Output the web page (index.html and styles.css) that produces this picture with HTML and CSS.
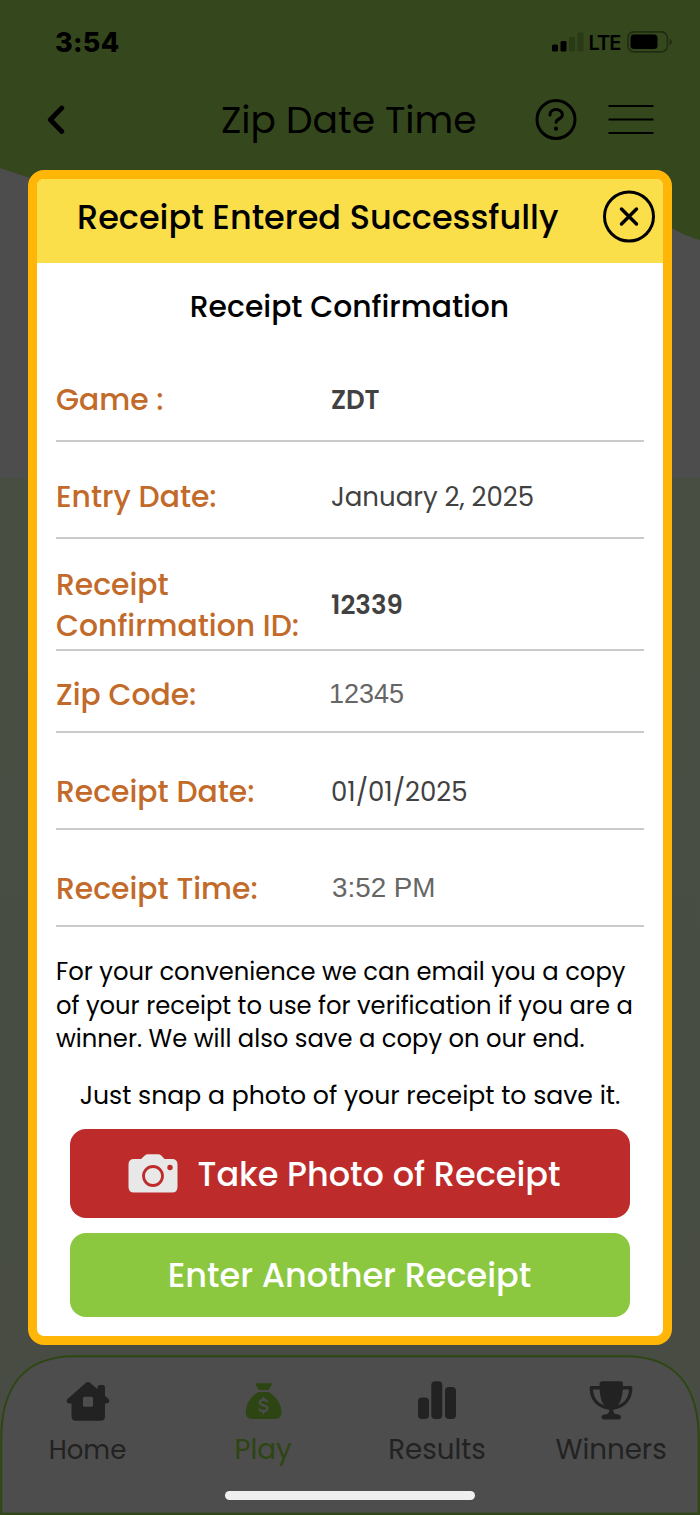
FILE: index.html
```html
<!DOCTYPE html>
<html lang="en">
<head>
<meta charset="utf-8">
<title>Zip Date Time</title>
<link rel="stylesheet" href="styles.css">
</head>
<body>
<div class="screen">
  <svg class="backdrop" viewBox="0 0 700 1515" aria-hidden="true">
    <defs>
      <linearGradient id="shade" x1="0" y1="0" x2="0" y2="1">
        <stop offset="0" stop-color="#484e42"/>
        <stop offset="1" stop-color="#484c44"/>
      </linearGradient>
    </defs>
    <rect width="700" height="1515" fill="#4d4d4d"/>
    <rect y="478" width="700" height="1037" fill="url(#shade)"/>
    <path d="M0 0H700V240Q685 236 670 227C560 180 420 240 240 220Q120 210 0 168Z" fill="#35471c"/>
  </svg>

  <header class="top">
    <div class="status">
      <span class="clock">3:54</span>
      <div class="signals">
        <svg width="32" height="20" viewBox="0 0 32 20" aria-hidden="true">
          <rect x="0" y="12.5" width="6" height="7" rx="1.5"/>
          <rect x="8.5" y="9" width="6" height="10.5" rx="1.5"/>
          <rect x="17" y="5" width="6" height="14.5" rx="1.5" fill="#2a3916"/>
          <rect x="25.500" y="0.500" width="6" height="19" rx="1.5" fill="#2a3916"/>
        </svg>
        <span class="lte">LTE</span>
        <svg width="46" height="22" viewBox="0 0 46 22" aria-hidden="true">
          <rect x="0.900" y="0.900" width="39.500" height="20" rx="6" fill="none" stroke="#202d10" stroke-width="1.600"/>
          <rect x="3.500" y="3.500" width="27" height="14.500" rx="3.500"/>
          <path d="M42.500 7.500Q45 9 45 11T42.500 14.500Z" fill="#202d10"/>
        </svg>
      </div>
    </div>
    <div class="nav">
      <svg class="back" width="20" height="30" viewBox="0 0 20 30" aria-label="Back"><path d="M16.800 3L5.300 14.700L16.800 26.500" fill="none" stroke="#000" stroke-width="4.800" stroke-linecap="round" stroke-linejoin="round"/></svg>
      <h1>Zip Date Time</h1>
      <svg class="help" width="42" height="42" viewBox="0 0 42 42" aria-label="Help">
        <circle cx="21" cy="20.500" r="19" fill="none" stroke="#000" stroke-width="3"/>
        <path d="M15 16C15 12.500 17.600 10.500 21 10.500S27.400 12.600 27.400 15.800C27.400 20.300 21.500 19.300 21.100 23.300" fill="none" stroke="#000" stroke-width="3" stroke-linecap="round"/>
        <circle cx="21" cy="29.700" r="2.100"/>
      </svg>
      <svg class="menu" width="46" height="30" viewBox="0 0 46 30" aria-label="Menu"><path d="M.5 1H45.500M.5 14.500H45.500M.5 28H45.500" stroke="#000" stroke-width="1.900"/></svg>
    </div>
  </header>

  <section class="modal">
    <div class="modal-head">
      <h2>Receipt Entered Successfully</h2>
      <svg width="54" height="54" viewBox="0 0 54 54" aria-label="Close">
        <circle cx="27" cy="26.500" r="24.500" fill="none" stroke="#000" stroke-width="3"/>
        <path d="M19.500 19L34.500 34M34.500 19L19.500 34" stroke="#000" stroke-width="3.500" stroke-linecap="round"/>
      </svg>
    </div>
    <div class="modal-body">
      <h3>Receipt Confirmation</h3>
      <dl>
        <div class="row"><dt>Game :</dt><dd class="bold">ZDT</dd></div>
        <div class="row"><dt>Entry Date:</dt><dd>January 2, 2025</dd></div>
        <div class="row tall"><dt>Receipt<br>Confirmation ID:</dt><dd class="bold num">12339</dd></div>
        <div class="row short"><dt>Zip Code:</dt><dd class="plain zip">12345</dd></div>
        <div class="row low"><dt>Receipt Date:</dt><dd>01/01/2025</dd></div>
        <div class="row low"><dt>Receipt Time:</dt><dd class="plain time">3:52 PM</dd></div>
      </dl>
      <p class="note">For your convenience we can email you a copy<br>of your receipt to use for verification if you are a<br>winner. We will also save a copy on our end.</p>
      <p class="snap">Just snap a photo of your receipt to save it.</p>
      <button class="photo">
        <svg width="50" height="39" viewBox="0 0 50 39" aria-hidden="true">
          <path d="M6 5H13L16.500 1.700Q18 .3 20 .3H30Q32 .3 33.500 1.700L36.500 5H44Q49.500 5 49.500 10.500V33Q49.500 38.500 44 38.500H6Q.5 38.500 .5 33V10.500Q.5 5 6 5Z" fill="#e8e8e8"/>
          <circle cx="25" cy="22" r="9.500" fill="none" stroke="#be2b2b" stroke-width="2.800"/>
          <circle cx="42" cy="13.500" r="2.700" fill="#be2b2b"/>
        </svg>
        <span>Take Photo of Receipt</span>
      </button>
      <button class="another"><span>Enter Another Receipt</span></button>
    </div>
  </section>

  <nav class="tabs">
    <svg class="tabs-shape" viewBox="0 0 700 160" aria-hidden="true"><path d="M1.200 158.800V85C1.200 32 24 1.200 74 1.200H626C676 1.200 698.800 32 698.800 85V158.800Z" fill="#4d4d4d" stroke="#2e4712" stroke-width="2"/></svg>
    <a class="tab home">
      <svg width="44" height="40" viewBox="0 0 44 40" aria-hidden="true"><path fill-rule="evenodd" d="M20 1.800Q22 .2 24 1.800L31.500 8.200V6.500Q31.500 4 34 4H36.500Q39 4 39 6.500V14.800L42.800 18.200Q44.500 21.500 41 22.500H39V35.500Q39 39.700 34.500 39.700H10Q5.500 39.700 5.500 35.500V22.500H2.800Q-.5 21.500 1.200 18.200ZM18.500 15.800Q17 15.800 17 17.300V24.300Q17 25.800 18.500 25.800H25.500Q27 25.800 27 24.300V17.300Q27 15.800 25.500 15.800Z" fill="#222"/></svg>
      <span>Home</span>
    </a>
    <a class="tab play">
      <svg width="44" height="40" viewBox="0 0 44 40" aria-hidden="true"><path d="M15 2.300H30Q31.500 2.300 30.700 3.800L27.500 8.900H18L14.800 3.800Q14 2.300 15 2.300ZM17.500 11H27.500C35 15 40.500 23.500 40.500 30.500V31.500Q40.500 38 34 38H11Q4.800 38 4.800 31.500V30.500C4.800 23.500 10 15 17.500 11Z" fill="#2d4512"/><path d="M26.200 20.300Q25 18.800 22.500 18.800Q18.800 18.800 18.800 21.700C18.800 25.300 26.400 23.300 26.400 27.200Q26.400 30.200 22.500 30.200Q19.700 30.200 18.400 28.300M22.500 16.800V18.500M22.500 30.500V32.300" fill="none" stroke="#4d4d4d" stroke-width="2.200" stroke-linecap="round"/></svg>
      <span>Play</span>
    </a>
    <a class="tab results">
      <svg width="44" height="40" viewBox="0 0 44 40" aria-hidden="true"><g fill="#222"><rect x="3" y="16.500" width="11" height="21.500" rx="4"/><rect x="16.300" y="0.300" width="11" height="37.700" rx="4"/><rect x="30" y="6" width="11" height="32" rx="4"/></g></svg>
      <span>Results</span>
    </a>
    <a class="tab winners">
      <svg width="44" height="40" viewBox="0 0 44 40" aria-hidden="true"><path d="M13.500 .3H31.500Q34 .3 34 3.300C34 16.300 31 27.300 22 27.300S10.500 16.300 10.500 3.300Q10.500 .3 13.500 .3Z" fill="#222"/><path d="M11 6.800H2.300C2.300 17.300 8 25.500 20 27M33 6.800H41.700C41.700 17.300 36 25.500 24 27" fill="none" stroke="#222" stroke-width="3.400" stroke-linejoin="round"/><path d="M19 26H25.500Q23.500 29 24.500 31Q25.500 33.500 29.500 33.500Q32 34 32 36Q32 38.500 29.500 38.500H15Q12.500 38.500 12.500 36Q12.500 34 15 33.500Q19 33.500 20 31Q21 29 19 26Z" fill="#222"/></svg>
      <span>Winners</span>
    </a>
    <i class="home-bar"></i>
  </nav>
</div>
</body>
</html>
```

FILE: styles.css
```css
* { box-sizing: border-box; }
body { margin: 0; }
h1, h2, h3, p, dl, dd { margin: 0; font-weight: 500; }
.screen {
  position: relative;
  width: 700px;
  height: 1515px;
  overflow: hidden;
  display: flex;
  flex-direction: column;
  justify-content: space-between;
  font-family: Poppins, Inter, "Open Sans", sans-serif;
  color: #000;
  white-space: nowrap;
}
.screen svg { display: block; flex: none; }
.backdrop { position: absolute; inset: 0; }
.top { position: relative; }

.status { display: flex; justify-content: space-between; align-items: center; padding: 27px 27.500px 0 55px; height: 57px; font-family: Inter, sans-serif; }
.clock { font-size: 27px; font-weight: 800; letter-spacing: .3px; line-height: 30px; padding-top: 2px; }
.signals { display: flex; align-items: center; }
.lte { font-size: 20px; font-weight: 600; line-height: 30px; margin: 2px 7px 0 5px; width: 31px; letter-spacing: -.9px; }
.nav { display: flex; align-items: center; height: 42px; margin-top: 42px; padding-left: 45px; }
.nav h1 { margin-left: 156px; width: 257px; font-size: 37.600px; font-weight: 400; line-height: 42px; }
.help { margin-left: 57px; }
.menu { margin-left: 31px; }

.modal {
  position: absolute;
  left: 28px;
  top: 170px;
  width: 644px;
  height: 1175px;
  border: 9px solid #ffb607;
  border-radius: 16px;
  background: #fff;
}
.modal-head {
  height: 84px;
  padding: 0 7px 8px 40px;
  display: flex;
  align-items: center;
  justify-content: space-between;
  border-radius: 7px 7px 0 0;
  background: #fadf4b;
}
.modal-head h2 { font-size: 33.500px; line-height: 42px; padding-top: 2px; }
.modal-body { padding: 24px 19px 0; display: flex; flex-direction: column; }
h3 { height: 58px; text-align: center; font-size: 29.800px; line-height: 40px; padding-right: 1px; }
.row {
  display: grid;
  grid-template-columns: 275px 1fr;
  align-items: center;
  height: 97px;
  padding-top: 15px;
  border-bottom: 2px solid #cacaca;
}
.row.tall { height: 112px; padding-top: 23px; }
.row.short { height: 82px; padding-top: 7px; }
.row.low { padding-top: 22px; }
dt { font-size: 29.800px; line-height: 41px; font-weight: 500; color: #c26a29; padding-bottom: 1px; }
dd { font-size: 26px; line-height: 36px; font-weight: 400; color: #414141; }
.bold { font-weight: 600; }
.num { padding-bottom: 2px; }
.plain { font-family: "Liberation Sans", Arial, sans-serif; font-size: 27px; color: #666; padding-bottom: 2px; }
.zip { margin-left: -2px; }
.time { font-size: 27.800px; padding-left: 1px; }
.note { margin-top: 28px; font-size: 24.240px; line-height: 33.500px; font-weight: 400; }
.snap { margin-top: 24px; text-align: center; font-size: 25.150px; line-height: 32px; font-weight: 400; }
button {
  display: flex;
  align-items: center;
  justify-content: center;
  gap: 20px;
  width: 560px;
  margin: 0 14px;
  padding: 0;
  border: 0;
  border-radius: 16px;
  color: #fff;
  font: 500 33.500px/42px Poppins, Inter, "Open Sans", sans-serif;
}
button span { padding-top: 2px; }
.photo { height: 89px; margin-top: 17.500px; padding-right: 12px; background: #be2b2b; }
.another { height: 84px; margin-top: 15px; padding-right: 1px; background: #8bc83f; }

.tabs { position: relative; height: 160px; display: flex; }
.tabs-shape { position: absolute; inset: 0; }
.tab { position: relative; width: 175px; display: flex; flex-direction: column; align-items: center; padding-top: 26px; color: #222; }
.tab span { margin-top: 14px; padding-left: 1px; font-size: 27.700px; line-height: 30px; }
.tab.home span { padding-left: 0; font-size: 26px; }
.tab.play { color: #2d4512; }
.tab.results { width: 173px; }
.home-bar { position: absolute; left: 225px; top: 136px; width: 250px; height: 9px; border-radius: 5px; background: #efefef; }
```
